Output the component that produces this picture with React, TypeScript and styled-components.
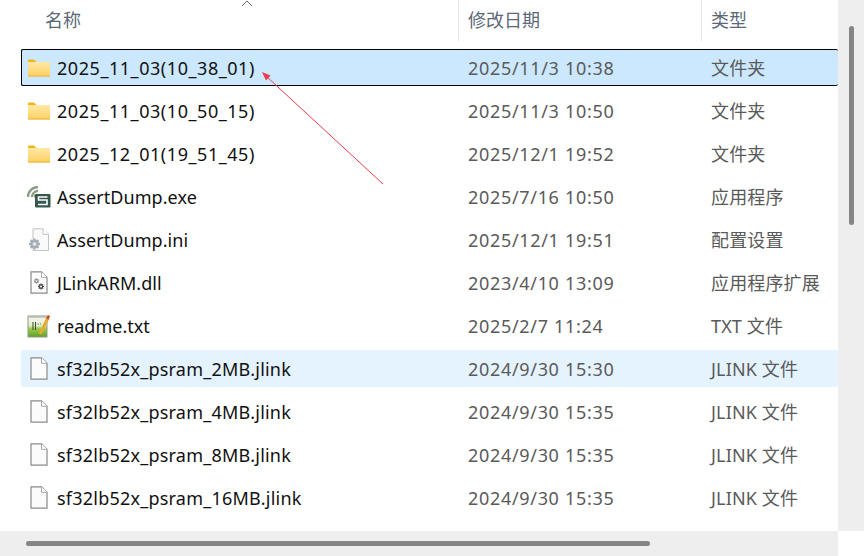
import React, { FC } from "react";
import styled, { createGlobalStyle } from "styled-components";

const GlobalStyle = createGlobalStyle`
    html, body {
        margin: 0;
        padding: 0;
        background: #fff;
        overflow: hidden;
    }
`;

const FONT = `"Noto Sans", "Noto Sans CJK SC", sans-serif`;

const Window = styled.div`
    position: relative;
    width: 864px;
    height: 556px;
    display: grid;
    grid-template-columns: 838px 26px;
    grid-template-rows: 531px 25px;
    font-family: ${FONT};
    font-size: 18px;
    line-height: 24px;
    overflow: hidden;
`;

const Content = styled.div`
    overflow: hidden;
    display: flex;
    flex-direction: column;
`;

const Header = styled.div`
    position: relative;
    height: 41px;
    flex: none;
    display: grid;
    grid-template-columns: 458px 243px 1fr;
    margin-bottom: 8px;
`;

const HeaderCell = styled.div<{ $first?: boolean }>`
    display: flex;
    align-items: center;
    padding-left: ${(p) => (p.$first ? "45px" : "9px")};
    padding-bottom: 1px;
    color: #5b6878;
    font-size: 18px;
    border-left: ${(p) => (p.$first ? "none" : "1px solid #e5e5e5")};
`;

const SortMark = styled.svg`
    position: absolute;
    left: 241px;
    top: 0;
`;

const Rows = styled.div`
    display: flex;
    flex-direction: column;
    gap: 6px;
    padding-left: 21px;
`;

const Row = styled.div<{ $state?: "selected" | "hover" }>`
    height: 37px;
    box-sizing: border-box;
    display: grid;
    grid-template-columns: 437px 243px 1fr;
    align-items: center;
    border-radius: 2px;
    background: ${(p) =>
        p.$state === "selected"
            ? "#cce8ff"
            : p.$state === "hover"
            ? "#e5f3ff"
            : "transparent"};
    border: 1px solid ${(p) => (p.$state === "selected" ? "#000" : "transparent")};
    border-right: none;
`;

const NameCell = styled.div<{ $track: number }>`
    display: flex;
    align-items: center;
    color: #111;
    white-space: nowrap;
    letter-spacing: ${(p) => p.$track}px;
`;

const IconSlot = styled.span`
    width: 34px;
    margin-right: 1px;
    display: flex;
    justify-content: center;
    flex: none;
`;

const DateCell = styled.div`
    color: #5a5a5a;
    white-space: nowrap;
    padding-left: 9px;
    letter-spacing: 0.68px;
`;

const TypeCell = styled.div`
    color: #5a5a5a;
    white-space: nowrap;
    padding-left: 9px;
    letter-spacing: 0.15px;
`;

const TrackRight = styled.div`
    background: #eeeeee;
    position: relative;
`;

const ThumbV = styled.div`
    position: absolute;
    left: 11px;
    top: 26px;
    width: 5px;
    height: 199px;
    border-radius: 3px;
    background: #858585;
`;

const TrackBottom = styled.div`
    background: #eeeeee;
    position: relative;
`;

const ThumbH = styled.div`
    position: absolute;
    left: 26px;
    top: 10px;
    width: 624px;
    height: 5px;
    border-radius: 3px;
    background: #858585;
`;

const Corner = styled.div`
    background: #fff;
`;

const ArrowOverlay = styled.svg`
    position: absolute;
    left: 0;
    top: 0;
    pointer-events: none;
`;

const FolderIcon: FC = () => (
    <svg width="22" height="18" viewBox="0 0 22 18">
        <defs>
            <linearGradient id="folderFill" x1="0" y1="0" x2="0" y2="1">
                <stop offset="0" stopColor="#ffe9a6" />
                <stop offset="1" stopColor="#fcd062" />
            </linearGradient>
        </defs>
        <path d="M0 1.5 Q0 0.5 1 0.5 H6 L8.5 3 H0 Z" fill="#f6b31c" />
        <rect x="0" y="3" width="22" height="14.5" fill="url(#folderFill)" />
        <rect x="0" y="16.5" width="22" height="1" fill="#eeb53a" />
    </svg>
);

const PageIcon: FC = () => (
    <svg width="18" height="23" viewBox="0 0 18 23">
        <path
            d="M1 .8 H11.5 L17 6.3 V22.2 H1 Z"
            fill="#fbfbfb"
            stroke="#8a8a8a"
            strokeWidth="1.2"
        />
        <path d="M11.5 .8 V6.3 H17" fill="#fff" stroke="#a8a8a8" />
    </svg>
);

const ExeIcon: FC = () => (
    <svg width="24" height="22" viewBox="0 0 24 22">
        <path d="M1 11 A10 10 0 0 1 11 1" fill="none" stroke="#8d9c82" strokeWidth="2.4" />
        <path d="M5 11 A6 6 0 0 1 11 5" fill="none" stroke="#8d9c82" strokeWidth="2.4" />
        <circle cx="9" cy="10" r="2" fill="#7d8c72" />
        <rect x="8" y="8" width="15.5" height="13.5" rx="1" fill="#35594f" />
        <path
            d="M20.5 11 H11.5 V14 H20 V18.5 H11"
            fill="none"
            stroke="#fff"
            strokeWidth="1.6"
        />
    </svg>
);

const Gear: FC<{ cx: number; cy: number; r: number; color: string; hole: string }> = ({
    cx,
    cy,
    r,
    color,
    hole,
}) => (
    <g>
        {[0, 45, 90, 135].map((angle) => (
            <rect
                key={angle}
                x={cx - r * 0.22}
                y={cy - r}
                width={r * 0.44}
                height={r * 2}
                fill={color}
                transform={`rotate(${angle} ${cx} ${cy})`}
            />
        ))}
        <circle cx={cx} cy={cy} r={r * 0.74} fill={color} />
        <circle cx={cx} cy={cy} r={r * 0.34} fill={hole} />
    </g>
);

const IniIcon: FC = () => (
    <svg width="24" height="24" viewBox="0 0 24 24">
        <path d="M6 .8 H16 L21.5 6.3 V22.5 H6 Z" fill="#fafafa" stroke="#c4c4c4" />
        <path d="M16 .8 V6.3 H21.5" fill="#fff" stroke="#c4c4c4" />
        <Gear cx={7.5} cy={16} r={5.5} color="#a3adb6" hole="#e8ebee" />
    </svg>
);

const DllIcon: FC = () => (
    <svg width="18" height="23" viewBox="0 0 18 23">
        <path
            d="M1 .8 H11.5 L17 6.3 V22.2 H1 Z"
            fill="#fbfbfb"
            stroke="#8a8a8a"
            strokeWidth="1.2"
        />
        <path d="M11.5 .8 V6.3 H17" fill="#fff" stroke="#a8a8a8" />
        <Gear cx={6.5} cy={10} r={2.6} color="#8f8f8f" hole="#fbfbfb" />
        <Gear cx={11} cy={15.5} r={3} color="#4e4e4e" hole="#fbfbfb" />
    </svg>
);

const TxtIcon: FC = () => (
    <svg width="24" height="24" viewBox="0 0 24 24">
        <defs>
            <linearGradient id="txtFill" x1="0" y1="0" x2="0" y2="1">
                <stop offset="0" stopColor="#f4f6ee" />
                <stop offset="0.45" stopColor="#e6eed2" />
                <stop offset="0.6" stopColor="#9ccb4a" />
                <stop offset="1" stopColor="#5f9e2c" />
            </linearGradient>
        </defs>
        <rect x="1" y="2" width="19" height="21" fill="url(#txtFill)" stroke="#8d9a80" />
        <path d="M1 3 H20" stroke="#b8bdb0" strokeWidth="1.5" />
        <path d="M6 8 V16 M8.5 8 V16" stroke="#3d4a33" strokeWidth="1" />
        <path d="M10.5 10 H14" stroke="#66705c" strokeWidth="1" strokeDasharray="1.5 1" />
        <path d="M13 20 L21 4" stroke="#e8a92e" strokeWidth="3" />
        <path d="M20.4 5 L22 1.5" stroke="#d0492f" strokeWidth="2.6" />
    </svg>
);

type Icon = "folder" | "page" | "exe" | "ini" | "dll" | "txt";

interface FileRow {
    name: string;
    date: string;
    type: string;
    icon: Icon;
    track: number;
    state?: "selected" | "hover";
}

const ICONS: Record<Icon, FC> = {
    folder: FolderIcon,
    page: PageIcon,
    exe: ExeIcon,
    ini: IniIcon,
    dll: DllIcon,
    txt: TxtIcon,
};

const files: FileRow[] = [
    { name: "2025_11_03(10_38_01)", date: "2025/11/3 10:38", type: "文件夹", icon: "folder", track: 0.55, state: "selected" },
    { name: "2025_11_03(10_50_15)", date: "2025/11/3 10:50", type: "文件夹", icon: "folder", track: 0.55 },
    { name: "2025_12_01(19_51_45)", date: "2025/12/1 19:52", type: "文件夹", icon: "folder", track: 0.55 },
    { name: "AssertDump.exe", date: "2025/7/16 10:50", type: "应用程序", icon: "exe", track: 0.07 },
    { name: "AssertDump.ini", date: "2025/12/1 19:51", type: "配置设置", icon: "ini", track: 0.07 },
    { name: "JLinkARM.dll", date: "2023/4/10 13:09", type: "应用程序扩展", icon: "dll", track: 0.07 },
    { name: "readme.txt", date: "2025/2/7 11:24", type: "TXT 文件", icon: "txt", track: 0 },
    { name: "sf32lb52x_psram_2MB.jlink", date: "2024/9/30 15:30", type: "JLINK 文件", icon: "page", track: 0.22, state: "hover" },
    { name: "sf32lb52x_psram_4MB.jlink", date: "2024/9/30 15:35", type: "JLINK 文件", icon: "page", track: 0.22 },
    { name: "sf32lb52x_psram_8MB.jlink", date: "2024/9/30 15:35", type: "JLINK 文件", icon: "page", track: 0.22 },
    { name: "sf32lb52x_psram_16MB.jlink", date: "2024/9/30 15:35", type: "JLINK 文件", icon: "page", track: 0.22 },
];

const App: FC = () => (
    <Window>
        <GlobalStyle />
        <Content>
            <Header>
                <HeaderCell $first>名称</HeaderCell>
                <HeaderCell>修改日期</HeaderCell>
                <HeaderCell>类型</HeaderCell>
                <SortMark width="12" height="7" viewBox="0 0 12 7">
                    <path d="M1 6 L6 1 L11 6" fill="none" stroke="#6d6d6d" strokeWidth="1" />
                </SortMark>
            </Header>
            <Rows>
                {files.map((file) => {
                    const Glyph = ICONS[file.icon];
                    return (
                        <Row key={file.name} $state={file.state}>
                            <NameCell $track={file.track}>
                                <IconSlot>
                                    <Glyph />
                                </IconSlot>
                                {file.name}
                            </NameCell>
                            <DateCell>{file.date}</DateCell>
                            <TypeCell>{file.type}</TypeCell>
                        </Row>
                    );
                })}
            </Rows>
        </Content>
        <TrackRight>
            <ThumbV />
        </TrackRight>
        <TrackBottom>
            <ThumbH />
        </TrackBottom>
        <Corner />
        <ArrowOverlay width="864" height="556" viewBox="0 0 864 556">
            <path d="M383 184 L266 76" stroke="#ee3a4c" strokeWidth="1" fill="none" />
            <path d="M262 72 L270.5 75.5 L266 80.5 Z" fill="#ee3a4c" />
        </ArrowOverlay>
    </Window>
);

export default App;
